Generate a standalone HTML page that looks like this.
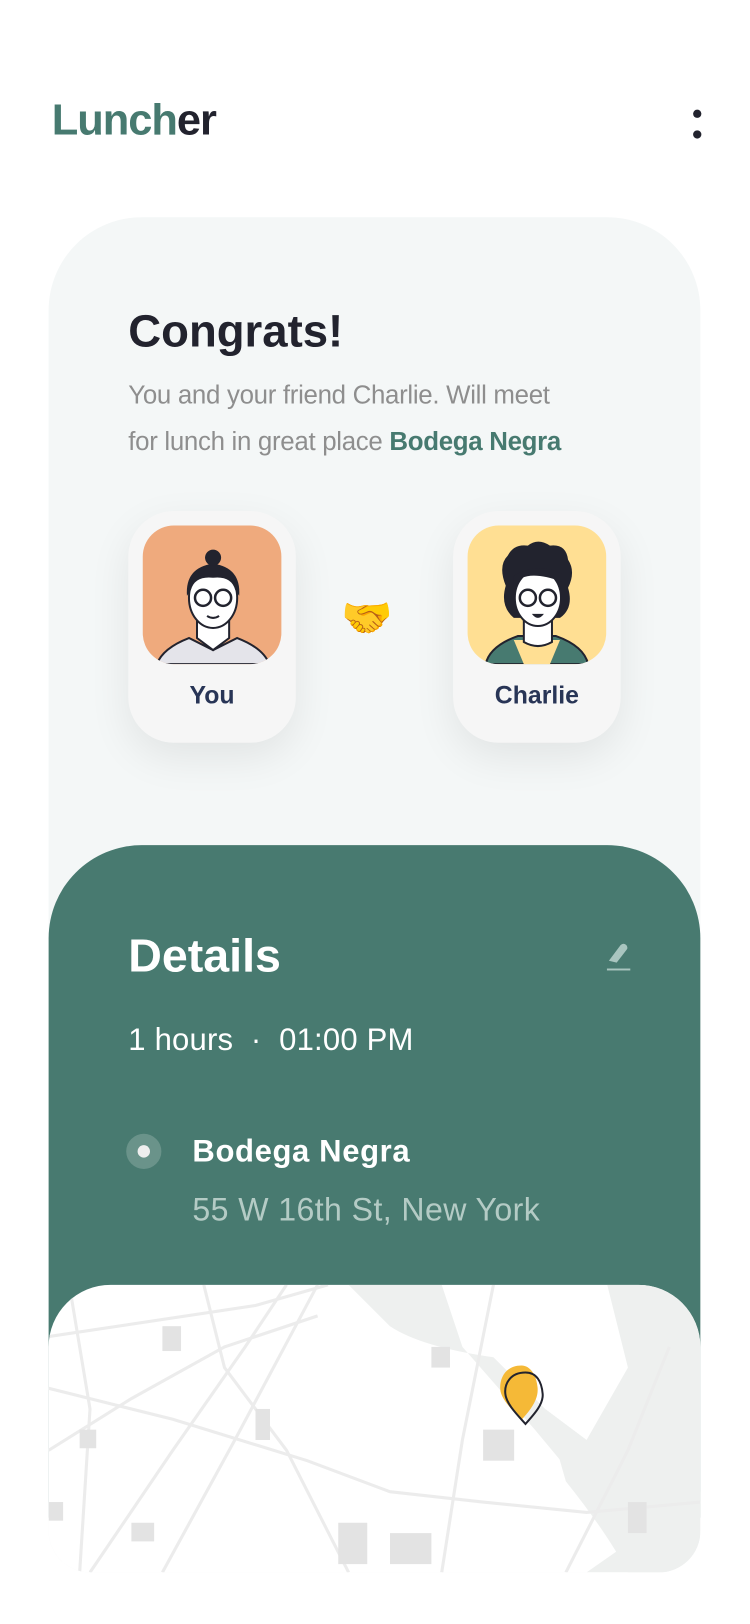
<!DOCTYPE html>
<html><head><meta charset="utf-8"><style>
*{margin:0;padding:0;box-sizing:border-box}
body{width:750px;height:1624px;background:#fff;font-family:"Liberation Sans",sans-serif;position:relative;overflow:hidden}
#w{position:absolute;left:0;top:0;width:725px;height:1570px;transform:scale(1.03448);transform-origin:0 0}
.abs{position:absolute}
.logo{left:50px;top:92px;font-size:42px;font-weight:bold;color:#477a70;letter-spacing:-1px}
.logo span{color:#22232e}
.dot{width:8px;height:8px;border-radius:50%;background:#22232e;left:670px}
.card{left:47px;top:210px;width:630px;height:1310px;background:#f4f7f7;border-radius:90px 90px 40px 40px;overflow:hidden}
h1{position:absolute;left:124px;top:296px;font-size:44px;color:#22232e}
.sub{left:124px;top:360px;font-size:25px;line-height:45px;color:#8e8e8e;width:430px;letter-spacing:-0.3px}
.sub b{color:#477a70}
.pc{width:162px;height:224px;background:#f6f6f6;border-radius:44px;box-shadow:0 14px 40px rgba(0,0,0,0.08);top:494px}
.av{position:absolute;left:14px;top:14px;width:134px;height:134px;border-radius:30px;overflow:hidden}
.pc .nm{position:absolute;left:0;right:0;top:165px;text-align:center;font-size:24px;font-weight:bold;color:#283556}
.green{left:47px;top:817px;width:630px;height:650px;background:#487a70;border-radius:90px 90px 0 0}
.map{left:47px;top:1242px;width:630px;height:278px;background:#fff;border-radius:60px 60px 40px 40px;overflow:hidden}
</style></head><body><div id="w">
<div class="abs logo">Lunch<span>er</span></div>
<div class="abs dot" style="top:106px"></div>
<div class="abs dot" style="top:126px"></div>
<div class="abs card"></div>
<h1>Congrats!</h1>
<div class="abs sub">You and your friend Charlie. Will meet for lunch in great place <b>Bodega Negra</b></div>

<div class="abs pc" style="left:124px">
 <div class="av" style="background:#efaa7d">
  <svg width="134" height="134" viewBox="0 0 138 138">
   <path d="M14 138 Q20 122 46 112 L70 124 L94 112 Q120 122 126 138Z" fill="#e4e4ea" stroke="#22232e" stroke-width="2"/>
   <path d="M54 94 L54 112 L70 124 L86 112 L86 94Z" fill="#fff" stroke="#22232e" stroke-width="2"/>
   <ellipse cx="70" cy="72" rx="24" ry="30" fill="#fff" stroke="#22232e" stroke-width="2"/>
   <path d="M44 70 Q42 42 70 38 Q98 42 96 70 L92 64 Q88 50 70 52 Q52 50 48 64Z" fill="#22232e"/>
   <circle cx="70" cy="32" r="8" fill="#22232e"/>
   <circle cx="60" cy="72" r="8" fill="none" stroke="#22232e" stroke-width="2.5"/>
   <circle cx="80" cy="72" r="8" fill="none" stroke="#22232e" stroke-width="2.5"/>
   <path d="M64 90 Q70 94 76 90" fill="none" stroke="#22232e" stroke-width="2"/>
  </svg>
 </div>
 <div class="nm">You</div>
</div>
<div class="abs" style="left:330px;top:574px;font-size:40px;font-family:'Noto Color Emoji',sans-serif">🤝</div>
<div class="abs pc" style="left:438px">
 <div class="av" style="background:#ffdf93">
  <svg width="134" height="134" viewBox="0 0 138 138">
   <path d="M18 138 Q22 120 50 110 L88 110 Q116 120 120 138Z" fill="#477a70" stroke="#22232e" stroke-width="2"/>
   <path d="M46 114 L56 138 L82 138 L92 114Z" fill="#ffdf93"/>
   <path d="M56 94 L56 116 Q70 124 84 116 L84 94Z" fill="#fff" stroke="#22232e" stroke-width="2"/>
   <path d="M38 60 Q30 40 40 30 Q46 18 60 20 Q70 12 82 20 Q98 18 100 34 Q108 46 100 62 Q106 82 92 92 L46 92 Q32 80 38 60Z" fill="#22232e"/>
   <ellipse cx="70" cy="72" rx="23" ry="28" fill="#fff" stroke="#22232e" stroke-width="2"/>
   <path d="M46 60 Q56 42 94 56 L94 48 Q70 36 46 50Z" fill="#22232e"/>
   <circle cx="60" cy="72" r="8" fill="none" stroke="#22232e" stroke-width="2.5"/>
   <circle cx="80" cy="72" r="8" fill="none" stroke="#22232e" stroke-width="2.5"/>
   <path d="M64 88 Q70 96 76 88Z" fill="#22232e"/>
  </svg>
 </div>
 <div class="nm">Charlie</div>
</div>

<div class="abs green"></div>
<div class="abs" style="left:124px;top:898px;font-size:45px;font-weight:bold;color:#fff">Details</div>
<svg class="abs" style="left:584px;top:908px" width="28" height="32" viewBox="0 0 28 34"><path d="M4 22 L16 6 Q19 3 22 6 Q24 9 22 11 L12 24 Z" fill="#a9c5bf"/><rect x="2" y="30" width="24" height="2" fill="#a9c5bf"/></svg>
<div class="abs" style="left:124px;top:989px;font-size:30px;color:#fff;letter-spacing:0.2px">1 hours &nbsp;·&nbsp; 01:00 PM</div>
<div class="abs" style="left:122px;top:1096px;width:34px;height:34px;border-radius:50%;background:#6a938a"></div>
<div class="abs" style="left:133px;top:1107px;width:12px;height:12px;border-radius:50%;background:#eee"></div>
<div class="abs" style="left:186px;top:1097px;font-size:30px;font-weight:bold;color:#fff;letter-spacing:0.6px">Bodega Negra</div>
<div class="abs" style="left:186px;top:1152px;font-size:31px;color:#b4cbc5;letter-spacing:0.4px">55 W 16th St, New York</div>

<div class="abs map">
 <svg width="630" height="278" viewBox="0 0 630 278">
  <path d="M290 0 L380 0 L400 60 L470 140 L520 200 L560 250 L520 278 L630 278 L630 0 L540 0 L560 80 L520 150 L480 120 L430 70 Q360 60 330 40Z" fill="#eef0ef"/>
  <path d="M480 120 L520 150 L600 180 L630 200 L630 278 L560 278 Q540 240 500 190Z" fill="#eef0ef"/>
  <g stroke="#ececec" stroke-width="3" fill="none">
   <path d="M0 50 L200 20 L270 0"/><path d="M0 160 L80 110 L170 60 L260 30"/>
   <path d="M40 278 L120 160 L190 60 L230 0"/><path d="M110 278 L180 150 L260 0"/>
   <path d="M0 100 L120 130 L250 170 L330 200 L420 210 L520 220 L630 210"/>
   <path d="M150 0 L170 80 L230 160 L290 278"/><path d="M20 0 L40 120 L30 278"/>
   <path d="M430 0 L400 150 L380 278"/><path d="M600 60 L560 160 L500 278"/>
  </g>
  <g fill="#e3e3e3">
   <rect x="110" y="40" width="18" height="24"/><rect x="30" y="140" width="16" height="18"/>
   <rect x="200" y="120" width="14" height="30"/><rect x="330" y="240" width="40" height="30"/>
   <rect x="280" y="230" width="28" height="40"/><rect x="370" y="60" width="18" height="20"/>
   <rect x="80" y="230" width="22" height="18"/><rect x="560" y="210" width="18" height="30"/>
   <rect x="0" y="210" width="14" height="18"/><rect x="420" y="140" width="30" height="30"/>
  </g>
 </svg>
</div>
<svg class="abs" style="left:476px;top:1318px" width="62" height="78" viewBox="0 0 60 80">
 <path d="M27 2 C12 2 5 14 6 26 C7 36 18 46 27 56 C36 46 44 36 43 24 C42 12 36 2 27 2Z" fill="#f5b937"/>
 <path d="M31 9 C16 9 10 20 11 30 C12 40 22 50 31 60 C40 50 49 40 48 30 C47 18 42 9 31 9Z" fill="none" stroke="#22232e" stroke-width="2"/>
</svg>
</div></body></html>
